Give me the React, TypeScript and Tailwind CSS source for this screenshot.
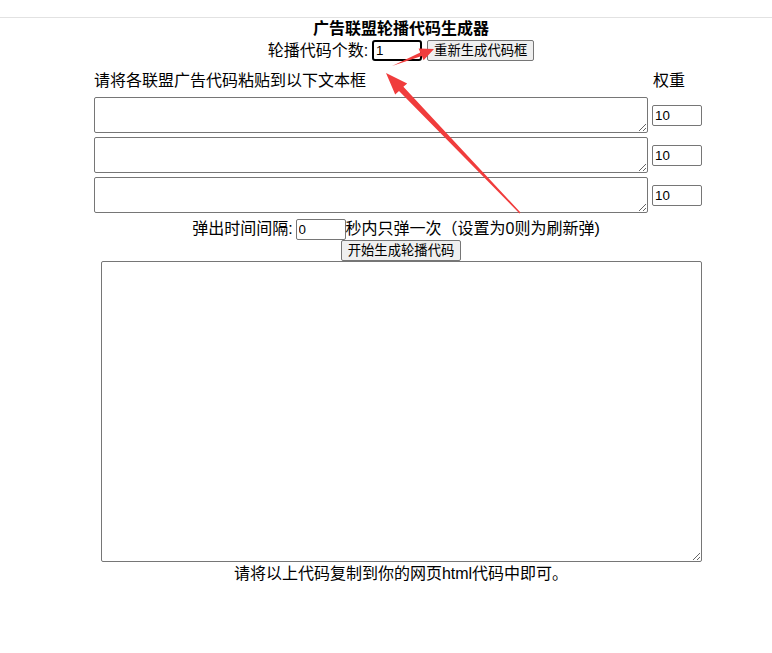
const font = { fontFamily: '"Liberation Sans", "Noto Sans CJK SC", sans-serif' };

function WeightRow() {
  return (
    <div className="flex items-center gap-[4px] h-[36px]">
      <textarea className="w-[554px] h-[36px] border border-[#767676] rounded-[2px] bg-white" />
      <input
        defaultValue="10"
        className="w-[50px] h-[21px] border border-[#767676] rounded-[2px] px-[2px] text-[13.33px] leading-[17px] text-black"
      />
    </div>
  );
}

export default function App() {
  return (
    <div className="relative w-[772px] h-[653px] bg-white text-black text-[16px]" style={font}>
      <div className="h-[18px] border-b border-[#e2e2e2]" />

      <div className="ml-[94px] w-[614px]">
        <div className="h-[21px] text-center font-bold leading-[21px]">广告联盟轮播代码生成器</div>

        <div className="h-[23px] flex items-center justify-center">
          <span className="leading-[20px]">轮播代码个数:</span>
          <input
            defaultValue="1"
            className="ml-[4px] w-[50px] h-[21px] border-2 border-black rounded-[3px] px-[2px] text-[13.33px] leading-[17px] outline-none"
          />
          <button className="ml-[5px] h-[21px] px-[6px] border border-[#767676] rounded-[2px] bg-[#efefef] text-[13.33px] leading-[17px]">
            重新生成代码框
          </button>
        </div>

        <div className="h-[35px] flex items-center pt-[3px]">
          <span className="w-[559px]">请将各联盟广告代码粘贴到以下文本框</span>
          <span>权重</span>
        </div>

        <div className="flex flex-col gap-[4px]">
          <WeightRow />
          <WeightRow />
          <WeightRow />
        </div>

        <div className="mt-[5px] h-[22px] flex items-center justify-center pr-[10px]">
          <span>弹出时间间隔:</span>
          <input
            defaultValue="0"
            className="ml-[3px] w-[50px] h-[21px] border border-[#767676] rounded-[2px] px-[2px] text-[13.33px] leading-[17px]"
          />
          <span>秒内只弹一次（设置为0则为刷新弹)</span>
        </div>

        <div className="flex justify-center">
          <button className="h-[21px] px-[6px] border border-[#767676] rounded-[2px] bg-[#efefef] text-[13.33px] leading-[17px]">
            开始生成轮播代码
          </button>
        </div>

        <div className="flex justify-center">
          <textarea className="w-[601px] h-[301px] border border-[#767676] rounded-[2px] bg-white" />
        </div>

        <div className="h-[24px] leading-[24px] text-center">请将以上代码复制到你的网页html代码中即可。</div>
      </div>

      <svg className="absolute left-0 top-0 pointer-events-none" width="772" height="653" viewBox="0 0 772 653">
        <polygon
          fill="#f03c3c"
          points="392,66 421.8,56.1 423.6,60.2 434,49 418.6,48.4 420.3,52.4"
        />
        <polygon
          fill="#f03c3c"
          points="520.5,212.5 403.4,86.8 407.2,83.4 386,73 395.2,94.6 399,91 519.5,213.5"
        />
      </svg>
    </div>
  );
}
